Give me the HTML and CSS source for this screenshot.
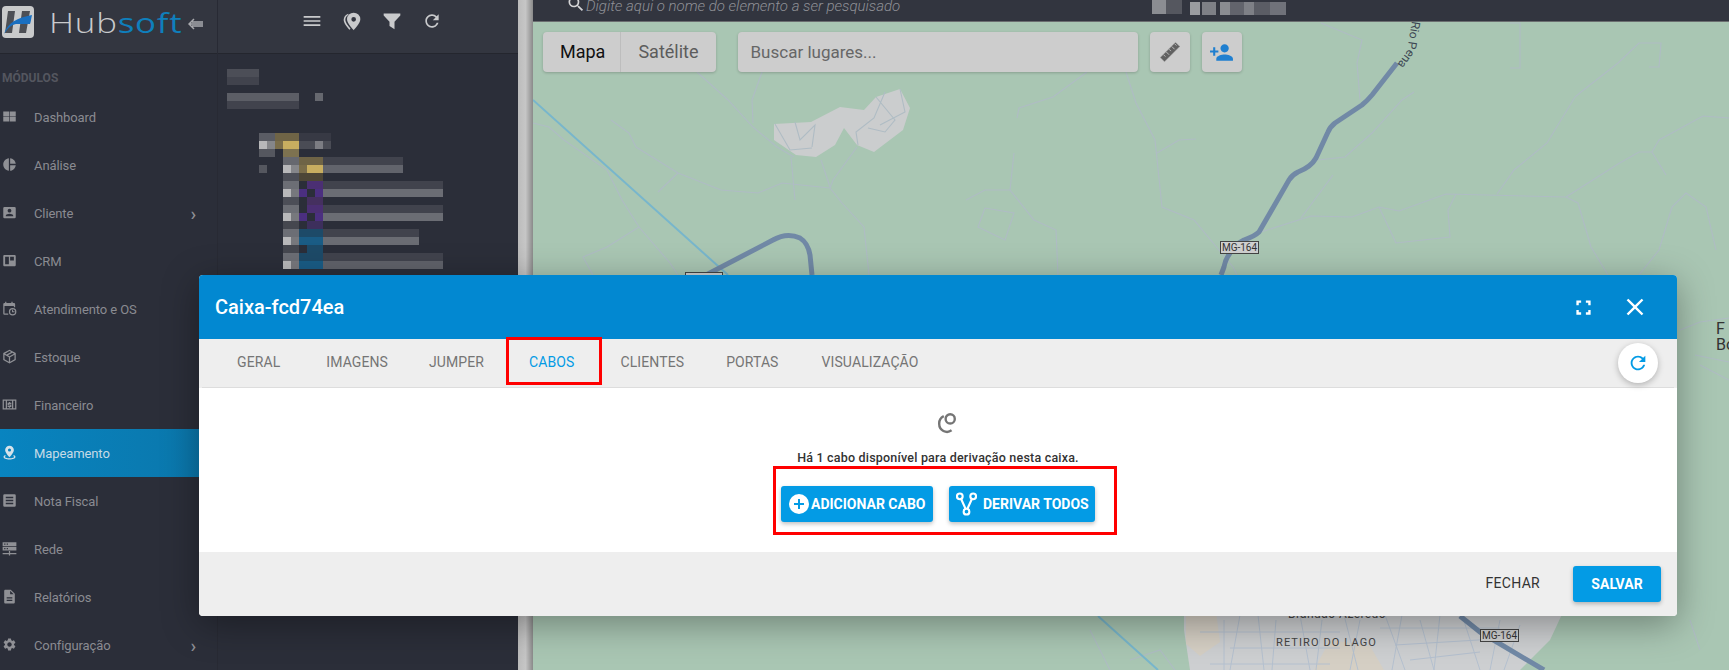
FILE: index.html
```html
<!DOCTYPE html>
<html lang="pt-BR">

<head>
  <meta charset="UTF-8">
  <meta name="viewport" content="width=device-width, initial-scale=1.0">
  <title>Hubsoft - Mapeamento</title>
  <link rel="stylesheet" href="styles.css">
</head>

<body>
  <div class="sidebar">
    <div class="brand">
      <svg class="logo" viewBox="0 0 32 32">
        <rect width="32" height="32" rx="4" fill="#c9cacb" />
        <path d="M6 5h7l-3 22H3zM20 5h8l-4 22h-7z" fill="#4d4f55" />
        <path d="M2 28C6 16 15 12 30 9c-1 4-1 6-2 9H14C9 19 5 23 2 28z" fill="#1a6fc0" />
      </svg>
      <span class="wordmark">Hub<span class="wordmark-soft">soft</span></span>
      <svg class="collapse" viewBox="0 0 16 12">
        <path d="M6 1 1 6l5 5M4 4h11M2 6h13M4 8h11" fill="none" stroke="#a9aaae" stroke-width="1.5" />
      </svg>
    </div>
    <div class="section-label">MÓDULOS</div>
    <a class="nav-item">
      <svg viewBox="0 0 24 24"><path d="M2 4h9.5v7.5H2zM12.5 4H22v7.5h-9.5zM2 12.5h9.500v7.500H2zM12.500 12.500H22V20h-9.500z" /></svg>
      Dashboard
    </a>
    <a class="nav-item">
      <svg viewBox="0 0 24 24"><path d="M11 2v20c-5.070-.5-9-4.790-9-10s3.930-9.500 9-10zm2.030 0v8.990H22c-.470-4.740-4.240-8.520-8.970-8.990zm0 11.010V22c4.740-.470 8.500-4.250 8.970-8.990h-8.970z" /></svg>
      Análise
    </a>
    <a class="nav-item">
      <svg viewBox="0 0 24 24"><path d="M2 5v14a2 2 0 0 0 2 2h16a2 2 0 0 0 2-2V5a2 2 0 0 0-2-2H4a2 2 0 0 0-2 2zm13 4c0 1.660-1.340 3-3 3s-3-1.340-3-3 1.340-3 3-3 3 1.340 3 3zm-9 8c0-2 4-3.100 6-3.100s6 1.100 6 3.100v1H6v-1z" /></svg>
      Cliente
      <span class="chevron">›</span>
    </a>
    <a class="nav-item">
      <svg viewBox="0 0 24 24"><path d="M20 3H4c-1.100 0-2 .9-2 2v14c0 1.100.9 2 2 2h16c1.100 0 2-.9 2-2V5c0-1.100-.9-2-2-2zM11 18H5V6h6v12zm8-6h-6V6h6v6z" /></svg>
      CRM
    </a>
    <a class="nav-item">
      <svg viewBox="0 0 24 24"><path d="M5 1h2v2h8V1h2v2h2a2 2 0 0 1 2 2v5h-2V8H4v12h6v2H4a2 2 0 0 1-2-2V5a2 2 0 0 1 2-2h1zM17 11a6 6 0 1 0 0 12 6 6 0 0 0 0-12zm0 2a4 4 0 1 1 0 8 4 4 0 0 1 0-8zm-1 1v4h4v-1.500h-2.500V14z" /></svg>
      Atendimento e OS
    </a>
    <a class="nav-item">
      <svg viewBox="0 0 24 24"><path d="M12 1 2 6.500v11L12 23l10-5.500v-11zm0 2.300 2.600 1.400-7.300 4.100L4.800 7.400zm4.700 2.600 2.500 1.500-7.200 4-2.500-1.400zM4 9.100l7 3.900v7.300l-7-3.900zm16 0v7.300l-7 3.900V13z" /></svg>
      Estoque
    </a>
    <a class="nav-item">
      <svg viewBox="0 0 24 24"><path d="M1 4h22v16H1zm2 2v12h3V6zm15 0v12h3V6zM8 6v12h8V6z" /><path d="M13 8v1h2v2h-4v1h4v4h-2v1h-2v-1H9v-2h4v-1H9V9h2V8z" /></svg>
      Financeiro
    </a>
    <a class="nav-item nav-item-active">
      <svg viewBox="0 0 24 24"><path d="M12 1a7 7 0 0 0-7 7c0 4.600 7 11.500 7 11.500S19 12.600 19 8a7 7 0 0 0-7-7zm0 4.500A2.500 2.500 0 1 1 12 10.500 2.500 2.500 0 0 1 12 5.500z" /><path d="M5 16c-1.500.8-2.500 1.800-2.500 3 0 2.200 4.200 4 9.500 4s9.500-1.800 9.500-4c0-1.200-1-2.200-2.500-3l-1 1.500c1 .5 1.500 1 1.500 1.500 0 1-3 2-7.500 2s-7.500-1-7.500-2c0-.5.5-1 1.500-1.500z" /></svg>
      Mapeamento
    </a>
    <a class="nav-item">
      <svg viewBox="0 0 24 24"><path d="M20 2H4a2 2 0 0 0-2 2v16a2 2 0 0 0 2 2h16a2 2 0 0 0 2-2V4a2 2 0 0 0-2-2zM6 6h12v2.500H6zm0 4.800h12v2.500H6zm0 4.700h12V18H6z" /></svg>
      Nota Fiscal
    </a>
    <a class="nav-item">
      <svg viewBox="0 0 24 24"><path d="M1 2h22v6H1zm0 7h22v6H1zm2.500-5v2h2V4zm4 0v2h2V4zm-4 7v2h2v-2zm4 0v2h2v-2zM11 16h2v3h10v2H13v2h-2v-2H1v-2h10z" fill-rule="evenodd" /></svg>
      Rede
    </a>
    <a class="nav-item">
      <svg viewBox="0 0 24 24"><path d="M14 1H5.500c-1.100 0-2 .9-2 2v18c0 1.100.9 2 2 2h13c1.100 0 2-.9 2-2V7.500L14 1zm2.500 18h-9v-2h9v2zm0-4h-9v-2h9v2zM13 8.500V2.800l5.700 5.700H13z" /></svg>
      Relatórios
    </a>
    <a class="nav-item">
      <svg viewBox="0 0 24 24"><path d="M19.140 12.940c.04-.3.060-.61.060-.94 0-.32-.02-.64-.07-.94l2.030-1.580a.49.49 0 0 0 .12-.61l-1.920-3.320a.488.488 0 0 0-.59-.22l-2.390.96c-.5-.38-1.030-.7-1.620-.94l-.36-2.540a.484.484 0 0 0-.48-.41h-3.840c-.24 0-.43.17-.47.41l-.36 2.540c-.59.24-1.130.57-1.620.94l-2.390-.96c-.22-.08-.47 0-.59.22L2.740 8.870c-.12.21-.08.47.12.61l2.030 1.580c-.05.3-.09.63-.09.94s.02.64.07.94l-2.030 1.580a.49.49 0 0 0-.12.61l1.920 3.320c.12.22.37.29.59.22l2.390-.96c.5.38 1.030.7 1.620.94l.36 2.540c.05.24.24.41.48.41h3.840c.24 0 .44-.17.47-.41l.36-2.540c.59-.24 1.130-.56 1.620-.94l2.390.96c.22.08.47 0 .59-.22l1.920-3.320c.12-.22.07-.47-.12-.61l-2.010-1.580zM12 15.600c-1.980 0-3.600-1.620-3.600-3.600s1.620-3.600 3.600-3.600 3.600 1.620 3.600 3.600-1.620 3.600-3.600 3.600z" /></svg>
      Configuração
      <span class="chevron">›</span>
    </a>
  </div>

  <div class="tree-panel">
    <div class="tree-toolbar">
      <svg viewBox="0 0 24 24"><path d="M2 18h20v-2H2v2zm0-5h20v-2H2v2zm0-7v2h20V6H2z" /></svg>
      <svg viewBox="0 0 24 24"><path d="M14 2a8 8 0 0 0-8 8c0 5 8 13 8 13s8-8 8-13a8 8 0 0 0-8-8zm0 5.200a2.800 2.800 0 1 1 0 5.600 2.800 2.800 0 0 1 0-5.600z" fill-rule="evenodd" /><path d="M7.500 3.200A8.400 8.400 0 0 0 2 10.500c0 3.800 4 9 7 12l1.200-1.300C7.500 18 4 13.500 4 10.500c0-2.600 1.500-4.800 3.700-6z" /></svg>
      <svg viewBox="0 0 24 24"><path d="M2 3h20v2.500L15 13v9l-6-4v-5L2 5.500z" /></svg>
      <svg viewBox="0 0 24 24"><path d="M17.650 6.350C16.200 4.900 14.210 4 12 4c-4.420 0-7.990 3.580-7.990 8s3.570 8 7.990 8c3.730 0 6.840-2.550 7.730-6h-2.080c-.82 2.330-3.040 4-5.650 4-3.310 0-6-2.690-6-6s2.690-6 6-6c1.660 0 3.140.69 4.220 1.780L13 11h7V4l-2.350 2.350z" /></svg>
    </div>
    <!-- arvore borrada no print original -->
    <svg class="tree-blur" viewBox="218 54 300 616" shape-rendering="crispEdges">
      <rect x="227" y="69" width="32" height="8" fill="#4c4e57" />
      <rect x="227" y="77" width="32" height="8" fill="#41434d" />
      <rect x="227" y="93" width="72" height="8" fill="#5c5e66" />
      <rect x="315" y="93" width="8" height="8" fill="#66686f" />
      <rect x="227" y="101" width="72" height="8" fill="#41434d" />
      <rect x="259" y="133" width="16" height="8" fill="#5a5c64" />
      <rect x="275" y="133" width="24" height="8" fill="#6f6446" />
      <rect x="299" y="133" width="32" height="8" fill="#373944" />
      <rect x="259" y="141" width="8" height="8" fill="#b8b8ba" />
      <rect x="267" y="141" width="8" height="8" fill="#85868a" />
      <rect x="275" y="141" width="8" height="8" fill="#7a6d4a" />
      <rect x="283" y="141" width="16" height="8" fill="#c8ae60" />
      <rect x="299" y="141" width="16" height="8" fill="#4a4c55" />
      <rect x="315" y="141" width="8" height="8" fill="#7c7d83" />
      <rect x="323" y="141" width="8" height="8" fill="#4a4c55" />
      <rect x="259" y="149" width="16" height="8" fill="#55575f" />
      <rect x="283" y="149" width="16" height="8" fill="#7d7250" />
      <rect x="283" y="157" width="16" height="8" fill="#66686f" />
      <rect x="299" y="157" width="24" height="8" fill="#6f6446" />
      <rect x="323" y="157" width="80" height="8" fill="#41434d" />
      <rect x="259" y="165" width="8" height="8" fill="#55575f" />
      <rect x="283" y="165" width="8" height="8" fill="#b8b8ba" />
      <rect x="291" y="165" width="8" height="8" fill="#85868a" />
      <rect x="299" y="165" width="8" height="8" fill="#7a6d4a" />
      <rect x="307" y="165" width="16" height="8" fill="#c8ae60" />
      <rect x="323" y="165" width="80" height="8" fill="#62646c" />
      <rect x="283" y="173" width="16" height="8" fill="#4c4e57" />
      <rect x="299" y="173" width="24" height="8" fill="#4d4636" />
      <rect x="283" y="181" width="16" height="8" fill="#6c6e75" />
      <rect x="307" y="181" width="16" height="8" fill="#4b2f73" />
      <rect x="323" y="181" width="120" height="8" fill="#41434d" />
      <rect x="283" y="189" width="8" height="8" fill="#b8b8ba" />
      <rect x="291" y="189" width="8" height="8" fill="#77787d" />
      <rect x="299" y="189" width="8" height="8" fill="#4b2f80" />
      <rect x="315" y="189" width="8" height="8" fill="#4b2f80" />
      <rect x="323" y="189" width="120" height="8" fill="#6b6d74" />
      <rect x="283" y="197" width="16" height="8" fill="#4c4e57" />
      <rect x="307" y="197" width="16" height="8" fill="#45305f" />
      <rect x="283" y="205" width="16" height="8" fill="#6c6e75" />
      <rect x="307" y="205" width="16" height="8" fill="#4b2f73" />
      <rect x="323" y="205" width="120" height="8" fill="#41434d" />
      <rect x="283" y="213" width="8" height="8" fill="#b8b8ba" />
      <rect x="291" y="213" width="8" height="8" fill="#77787d" />
      <rect x="299" y="213" width="8" height="8" fill="#4b2f80" />
      <rect x="315" y="213" width="8" height="8" fill="#4b2f80" />
      <rect x="323" y="213" width="120" height="8" fill="#6b6d74" />
      <rect x="283" y="221" width="16" height="8" fill="#45474f" />
      <rect x="307" y="221" width="16" height="8" fill="#3d2f5c" />
      <rect x="283" y="229" width="16" height="8" fill="#6c6e75" />
      <rect x="299" y="229" width="24" height="8" fill="#1d4a68" />
      <rect x="323" y="229" width="96" height="8" fill="#41434d" />
      <rect x="283" y="237" width="8" height="8" fill="#b8b8ba" />
      <rect x="291" y="237" width="8" height="8" fill="#77787d" />
      <rect x="299" y="237" width="24" height="8" fill="#1a5c85" />
      <rect x="323" y="237" width="96" height="8" fill="#6a6c73" />
      <rect x="283" y="245" width="16" height="8" fill="#45474f" />
      <rect x="307" y="245" width="16" height="8" fill="#1d4a68" />
      <rect x="283" y="253" width="16" height="8" fill="#6c6e75" />
      <rect x="299" y="253" width="24" height="8" fill="#1d4a68" />
      <rect x="323" y="253" width="120" height="8" fill="#41434d" />
      <rect x="283" y="261" width="8" height="8" fill="#b8b8ba" />
      <rect x="291" y="261" width="8" height="8" fill="#77787d" />
      <rect x="299" y="261" width="24" height="8" fill="#1a5c85" />
      <rect x="323" y="261" width="120" height="8" fill="#60626a" />
    </svg>
  </div>

  <div class="divider"></div>

  <div class="main">
    <div class="topbar">
      <svg class="topbar-search" viewBox="0 0 24 24"><path d="M15.500 14h-.79l-.28-.27A6.470 6.470 0 0 0 16 9.500 6.500 6.500 0 1 0 9.500 16c1.610 0 3.090-.59 4.230-1.570l.27.28v.79l5 4.990L20.490 19l-4.990-5zm-6 0C7.010 14 5 11.990 5 9.500S7.010 5 9.500 5 14 7.010 14 9.500 11.990 14 9.500 14z" /></svg>
      <span class="topbar-hint">Digite aqui o nome do elemento a ser pesquisado</span>
      <svg class="topbar-blur" viewBox="0 0 134 15" shape-rendering="crispEdges">
        <rect x="0" y="0" width="14" height="14" fill="#8b8d92" />
        <rect x="14" y="0" width="16" height="14" fill="#55575f" />
        <rect x="38" y="2" width="10" height="13" fill="#9a9ca0" />
        <rect x="50" y="2" width="14" height="13" fill="#7e8086" />
        <rect x="68" y="2" width="10" height="13" fill="#8a8c91" />
        <rect x="78" y="2" width="14" height="13" fill="#62646c" />
        <rect x="92" y="2" width="10" height="13" fill="#7e8086" />
        <rect x="102" y="2" width="16" height="13" fill="#5b5d65" />
        <rect x="118" y="2" width="16" height="13" fill="#70727a" />
      </svg>
    </div>
    <div class="map">
      <svg class="map-layer" viewBox="533 22 1196 648">
        <path class="map-urban" d="M1184 610h380l-14 30-30 30h-330l-6-40z" />
        <path class="map-beige" d="M1186 612h30l4 30-20 14-14-12zM1330 640l40 6 14 24h-70z" />
        <path class="map-blob" d="M774 124 811 122 840 107 864 110 876 97 900 89 910 108 903 130 874 152 857 145 844 128 835 145 816 157 796 155 774 140z" />
        <g class="map-street">
          <path d="M1224 620v50M1240 615l-10 55M1258 615l6 55M1276 620l-4 50M1300 615l10 55M1322 620l-6 50M1344 615l14 55M1360 620l-10 50M1385 615l20 55M1402 615l-10 55M1420 620l14 50M1440 615l-6 55M1462 615l18 55M1500 620l-10 50M1520 625l-16 45" />
          <path d="M1200 632h140M1230 648h110M1210 664h120M1380 628h120M1395 645l100-6M1410 660l70-8" />
        </g>
        <g class="map-track">
          <path d="M775 124 790 150 812 148M795 122 800 140 815 125 812 147M885 92 874 118 856 132 858 145M876 97 895 120 885 132 868 128M900 89 905 112 880 125" />
          <path d="M697 72 728 100 753 127 777 147 794 157M762 72 752 100 753 123M611 120 629 133 636 147 678 173 721 190 758 193 782 183 830 188 842 203 864 227 869 275" />
          <path d="M830 188 833 180 857 147M821 160 830 187M791 157 795 200M533 123 549 127 564 140 607 170 622 200 639 227 670 263 678 275M639 227 607 247 583 257 593 275M678 173 658 192" />
          <path d="M1087 72 1053 97 1019 108 1017 118M1126 72 1136 103 1155 140 1162 207 1194 220 1233 267 1237 275M1157 153 1179 140 1196 139M1014 153 1010 190 1034 220 1056 230 1058 275M1010 190 985 190 966 200M978 227 1005 240 1014 213 985 208z" />
          <path d="M1321 23 1362 40 1357 63 1360 100M1261 232 1311 216 1352 217 1379 207 1399 211 1446 194 1566 197 1578 203 1591 247 1608 275M1497 194 1514 170 1547 143 1575 97 1581 92 1618 63 1639 43 1661 43 1659 67 1649 67" />
          <path d="M1566 197 1618 164 1639 152 1652 152 1659 140 1703 116 1729 118M1652 152 1666 175M1672 207 1686 193 1706 207 1716 250M1672 207 1659 250 1639 275M1379 207 1396 243 1450 237 1448 210 1456 194M1301 218 1333 175M1318 160 1345 157 1372 133 1402 100 1414 92M1510 23 1520 23 1520 68 1510 68" />
          <path d="M1680 330 1700 322 1729 318M1690 620 1700 650M1090 630 1110 670M1130 660 1160 650 1175 670M1695 355 1729 362M1700 365 1729 380" />
        </g>
        <path class="map-river" d="M533 100 728 275M1098 616 1158 670" />
        <path class="map-road" d="M1397 63 1372 95Q1367 101 1362 105L1335 123Q1330 127 1328 132L1316 158Q1311 167 1298 172 1292 175 1289 180L1259 232Q1255 236 1244 240 1234 245 1230 253 1225 260 1224 267L1221 275M706 275 773 240Q787 232 800 238 808 243 810 255L812 275M1460 616 1480 632 1544 670" />
        <path id="rioPena" class="map-hidden" d="M1412 21 1407 51 1391 73" />
        <text class="map-label-road"><textPath href="#rioPena">Rio Pena</textPath></text>
        <rect class="map-shield" x="1220.500" y="241.500" width="38" height="12" />
        <text class="map-shield-text" x="1239.500" y="251">MG-164</text>
        <rect class="map-shield" x="685.500" y="272.500" width="37" height="12" />
        <rect class="map-shield" x="1480.500" y="629.500" width="38" height="12" />
        <text class="map-shield-text" x="1499.500" y="639">MG-164</text>
        <text class="map-place" x="1288" y="618">Brandão-Azeredo</text>
        <text class="map-place map-place-spaced" x="1276" y="646">RETIRO DO LAGO</text>
        <text class="map-city" x="1716" y="334">F</text>
        <text class="map-city" x="1716" y="350">Bo</text>
      </svg>

      <div class="map-controls">
        <div class="map-type">
          <span class="map-type-item map-type-active">Mapa</span>
          <span class="map-type-item">Satélite</span>
        </div>
        <div class="map-search">Buscar lugares...</div>
        <div class="map-button">
          <svg viewBox="0 0 24 24"><path d="M1 18 18 1l5 5L6 23zM5 15l2 2M8 12l3 3M11 9l2 2M14 6l3 3M17 3l2 2" fill="#616161" stroke="#cdcdcd" stroke-width=".9" /></svg>
        </div>
        <div class="map-button map-button-add">
          <svg viewBox="0 0 24 24"><path d="M15 12c2.210 0 4-1.790 4-4s-1.790-4-4-4-4 1.790-4 4 1.790 4 4 4zm-9-2V7H4v3H1v2h3v3h2v-3h3v-2H6zm9 4c-2.670 0-8 1.340-8 4v2h16v-2c0-2.660-5.330-4-8-4z" /></svg>
        </div>
      </div>
    </div>
  </div>

  <div class="modal">
    <div class="modal-header">
      <div class="modal-title">Caixa-fcd74ea</div>
      <svg class="modal-icon modal-icon-full" viewBox="0 0 24 24"><path d="M6 15H3v6h6v-3H6v-3zM3 9h3V6h3V3H3v6zm15 9h-3v3h6v-6h-3v3zM15 3v3h3v3h3V3h-6z" /></svg>
      <svg class="modal-icon" viewBox="0 0 24 24"><path d="M19 6.410 17.590 5 12 10.590 6.410 5 5 6.410 10.590 12 5 17.590 6.410 19 12 13.410 17.590 19 19 17.590 13.410 12z" transform="translate(12 12) scale(1.300) translate(-12 -12)" /></svg>
    </div>
    <div class="tabs">
      <a class="tab">GERAL</a>
      <a class="tab">IMAGENS</a>
      <a class="tab">JUMPER</a>
      <a class="tab tab-active">CABOS</a>
      <a class="tab">CLIENTES</a>
      <a class="tab">PORTAS</a>
      <a class="tab">VISUALIZAÇÃO</a>
      <button class="refresh">
        <svg viewBox="0 0 24 24"><path d="M17.650 6.350C16.200 4.900 14.210 4 12 4c-4.420 0-7.990 3.580-7.990 8s3.570 8 7.990 8c3.730 0 6.840-2.550 7.730-6h-2.080c-.82 2.330-3.040 4-5.650 4-3.310 0-6-2.690-6-6s2.690-6 6-6c1.660 0 3.140.69 4.220 1.780L13 11h7V4l-2.350 2.350z" /></svg>
      </button>
      <div class="mark mark-tab"></div>
    </div>
    <div class="modal-body">
      <svg class="cable-icon" viewBox="0 0 24 24"><circle cx="15.500" cy="7.500" r="5" fill="none" stroke="#757575" stroke-width="2.600" /><path d="M8.500 4.500A9 9 0 0 0 3.500 13a8.500 8.500 0 0 0 13.500 7" fill="none" stroke="#757575" stroke-width="2.600" /></svg>
      <p class="cable-text">Há 1 cabo disponível para derivação nesta caixa.</p>
      <div class="cable-actions">
        <button class="btn btn-add">
          <svg viewBox="0 0 20 20"><circle cx="10" cy="10" r="10" fill="#fff" /><path d="M9 5h2v4h4v2h-4v4H9v-4H5V9h4z" fill="#039be5" /></svg>
          ADICIONAR CABO
        </button>
        <button class="btn btn-derive">
          <svg viewBox="0 0 22 24"><g fill="none" stroke="#fff" stroke-width="2.200"><circle cx="4" cy="4" r="3" /><circle cx="18" cy="4" r="3" /><circle cx="11" cy="20" r="3" /><path d="M5.500 7 10 17M16.500 7 12 17" /></g></svg>
          DERIVAR TODOS
        </button>
        <div class="mark mark-actions"></div>
      </div>
    </div>
    <div class="modal-footer">
      <button class="btn-text">FECHAR</button>
      <button class="btn btn-save">SALVAR</button>
    </div>
  </div>
</body>

</html>
```

FILE: styles.css
```css
* {
  margin: 0;
  padding: 0;
  box-sizing: border-box;
  font-family: Roboto, "Liberation Sans", sans-serif;
}

body {
  display: flex;
  height: 100vh;
  overflow: hidden;
  background-color: #2b2e39;
}

/* menu lateral */
.sidebar {
  width: 218px;
  flex-shrink: 0;
  background: #2b2e39;
  border-right: 1px solid #282a34;
}

.brand {
  height: 54px;
  display: flex;
  align-items: center;
  background: #333640;
  border-bottom: 1px solid #24262e;
  padding-left: 2px;
}

.logo {
  width: 32px;
  height: 32px;
  margin-top: -10px;
}

.wordmark {
  display: inline-block;
  margin-left: 15px;
  margin-top: -9px;
  font-family: "Open Sans", sans-serif;
  font-weight: 300;
  font-size: 27px;
  color: #c9cacc;
  letter-spacing: .6px;
  transform: scaleX(1.29);
  transform-origin: left center;
}

.wordmark-soft {
  font-family: inherit;
  font-weight: 400;
  color: #0f7fbc;
}

.collapse {
  width: 16px;
  height: 12px;
  margin-left: 36px;
  margin-top: -6px;
}

.section-label {
  height: 39px;
  padding: 17px 0 0 2px;
  font-size: 12px;
  font-weight: 700;
  color: #54565f;
}

.nav-item {
  height: 48px;
  display: flex;
  align-items: center;
  padding-left: 34px;
  position: relative;
  font-size: 13px;
  letter-spacing: -.1px;
  color: #8a8b91;
}

.nav-item svg {
  position: absolute;
  left: 2px;
  top: 16px;
  width: 15px;
  height: 15px;
  fill: #8f9095;
}

.nav-item-active {
  background: linear-gradient(90deg, #0884c0, #0b76aa);
  color: #c6dbe6;
}

.nav-item-active svg {
  fill: #d6e3ea;
}

.chevron {
  position: absolute;
  right: 21px;
  top: 13px;
  font-size: 19px;
  font-weight: 500;
  color: #8f9095;
}

/* painel da arvore */
.tree-panel {
  width: 300px;
  flex-shrink: 0;
  background: #2b2e39;
}

.tree-toolbar {
  height: 54px;
  display: flex;
  align-items: center;
  gap: 20px;
  padding: 0 0 11px 84px;
  background: #333640;
  border-bottom: 1px solid #24262e;
}

.tree-toolbar svg {
  width: 20px;
  height: 20px;
  fill: #c9cacc;
}

.tree-blur {
  display: block;
  width: 300px;
  height: 616px;
}

.divider {
  width: 15px;
  flex-shrink: 0;
  background: linear-gradient(90deg, #bcbcbc, #c6c6c6 50%, #8a8a8a);
}

/* area do mapa */
.main {
  flex: 1;
  display: flex;
  flex-direction: column;
  min-width: 0;
}

.topbar {
  height: 22px;
  display: flex;
  align-items: flex-start;
  background: #32353f;
  border-bottom: 1px solid #6b6e70;
  overflow: hidden;
}

.topbar-search {
  width: 20px;
  height: 20px;
  margin: -6px 0 0 33px;
  fill: #d4d4d6;
}

.topbar-hint {
  margin-top: -3px;
  font-size: 15px;
  font-style: italic;
  font-weight: 300;
  color: #8f9096;
}

.topbar-blur {
  width: 134px;
  height: 15px;
  margin-left: 252px;
}

.map {
  flex: 1;
  position: relative;
  background: #a9c6b3;
  overflow: hidden;
}

.map-layer {
  position: absolute;
  left: 0;
  top: 0;
  width: 1196px;
  height: 648px;
}

.map-urban {
  fill: #cdcfd1;
}

.map-beige {
  fill: #d5cfc4;
}

.map-blob {
  fill: #cbcdce;
}

.map-track {
  fill: none;
  stroke: #afbcc4;
  stroke-width: 1.100;
}

.map-street {
  fill: none;
  stroke: #b4c0cf;
  stroke-width: 1;
}

.map-river {
  fill: none;
  stroke: #78b6cc;
  stroke-width: 2;
}

.map-road {
  fill: none;
  stroke: #7189a6;
  stroke-width: 5;
  stroke-linejoin: round;
}

.map-hidden {
  fill: none;
}

.map-label-road {
  font-size: 12px;
  fill: #3d4652;
}

.map-shield {
  fill: #cfd0d0;
  stroke: #444;
  stroke-width: 1;
}

.map-shield-text {
  font-size: 10px;
  fill: #333;
  text-anchor: middle;
}

.map-place {
  font-size: 12px;
  letter-spacing: .4px;
  fill: #444;
}

.map-place-spaced {
  font-size: 11px;
  letter-spacing: 1.100px;
}

.map-city {
  font-size: 16px;
  fill: #333;
}

.map-controls {
  position: absolute;
  left: 10px;
  top: 10px;
  display: flex;
  height: 40px;
}

.map-type {
  display: flex;
  background: #cdcdcd;
  border-radius: 4px;
  box-shadow: 0 1px 3px rgba(0, 0, 0, .2);
}

.map-type-item {
  padding: 0 17px;
  line-height: 40px;
  font-size: 18px;
  color: #5c5c5c;
}

.map-type-active {
  padding: 0 15px 0 17px;
  color: #111;
  border-right: 1px solid #bdbdbd;
}

.map-search {
  width: 400px;
  margin-left: 22px;
  padding-left: 13px;
  line-height: 40px;
  font-size: 17px;
  color: #666;
  background: #cdcdcd;
  border-radius: 4px;
  box-shadow: 0 1px 3px rgba(0, 0, 0, .2);
}

.map-button {
  width: 40px;
  margin-left: 12px;
  display: flex;
  align-items: center;
  justify-content: center;
  background: #cdcdcd;
  border-radius: 4px;
  box-shadow: 0 1px 3px rgba(0, 0, 0, .2);
}

.map-button svg {
  width: 22px;
  height: 22px;
}

.map-button-add svg {
  fill: #1f7fd0;
  width: 25px;
  height: 25px;
}

/* modal */
.modal {
  position: absolute;
  left: 199px;
  top: 275px;
  width: 1478px;
  height: 341px;
  display: flex;
  flex-direction: column;
  background: #fff;
  border-radius: 4px;
  box-shadow: 0 8px 36px rgba(0, 0, 0, .35);
}

.modal-header {
  height: 64px;
  display: flex;
  align-items: center;
  gap: 31px;
  padding: 0 31px 0 16px;
  background: #0288d1;
  border-radius: 4px 4px 0 0;
}

.modal-title {
  flex: 1;
  font-size: 20px;
  font-weight: 500;
  color: #fff;
}

.modal-icon {
  width: 22px;
  height: 22px;
  fill: #fff;
}

.modal-icon-full {
  width: 19px;
  height: 19px;
}

.tabs {
  height: 49px;
  margin: 0 3px;
  display: flex;
  align-items: center;
  position: relative;
  padding: 0 0 2px 13px;
  background: #eee;
  border-bottom: 1px solid #ddd;
  box-shadow: -3px 0 0 #eee, 3px 0 0 #eee;
}

.tab {
  padding: 0 21px 0 22px;
  font-size: 14px;
  letter-spacing: .1px;
  color: #757575;
}

.tab:nth-child(2) {
  margin-left: 3px;
}

.tab:nth-child(3) {
  margin-left: -2px;
}

.tab:nth-child(4) {
  margin-left: 2px;
}

.tab:nth-child(5) {
  margin-left: 3px;
}

.tab:nth-child(6) {
  margin-left: -1px;
}

.tab-active {
  color: #039be5;
}

.refresh {
  position: absolute;
  right: 16px;
  top: 4px;
  width: 40px;
  height: 40px;
  display: flex;
  align-items: center;
  justify-content: center;
  background: #fff;
  border: none;
  border-radius: 50%;
  box-shadow: 0 2px 6px rgba(0, 0, 0, .25);
}

.refresh svg {
  width: 22px;
  height: 22px;
  fill: #039be5;
}

/* marcacoes vermelhas do print */
.mark {
  position: absolute;
  border: 3px solid #f00;
  pointer-events: none;
}

.mark-tab {
  left: 304px;
  top: -2px;
  width: 96px;
  height: 48px;
}

.modal-body {
  flex: 1;
  display: flex;
  flex-direction: column;
  align-items: center;
  padding-top: 24px;
}

.cable-icon {
  width: 22px;
  height: 22px;
  margin-left: 18px;
}

.cable-text {
  margin-top: 16px;
  font-size: 12.500px;
  font-weight: 500;
  letter-spacing: .2px;
  color: #333;
}

.cable-actions {
  margin-top: 21px;
  display: flex;
  gap: 16px;
  position: relative;
}

.btn {
  height: 36px;
  display: flex;
  align-items: center;
  border: none;
  border-radius: 3px;
  background: #039be5;
  color: #fff;
  font-size: 14px;
  font-weight: 700;
  box-shadow: 0 2px 4px rgba(0, 0, 0, .25);
}

.btn-add {
  width: 152px;
  padding-left: 8px;
  gap: 2px;
}

.btn-add svg {
  width: 20px;
  height: 20px;
}

.btn-derive {
  width: 146px;
  padding-left: 7px;
  gap: 6px;
}

.btn-derive svg {
  width: 21px;
  height: 24px;
}

.mark-actions {
  left: -8px;
  top: -20px;
  width: 344px;
  height: 69px;
}

.modal-footer {
  height: 64px;
  display: flex;
  align-items: center;
  justify-content: flex-end;
  padding-right: 16px;
  background: #eee;
  border-radius: 0 0 4px 4px;
}

.btn-text {
  margin-right: 33px;
  padding-bottom: 2px;
  background: none;
  border: none;
  font-size: 14px;
  font-weight: 400;
  letter-spacing: .3px;
  color: #333;
}

.btn-save {
  width: 88px;
  justify-content: center;
  font-weight: 700;
}
```
